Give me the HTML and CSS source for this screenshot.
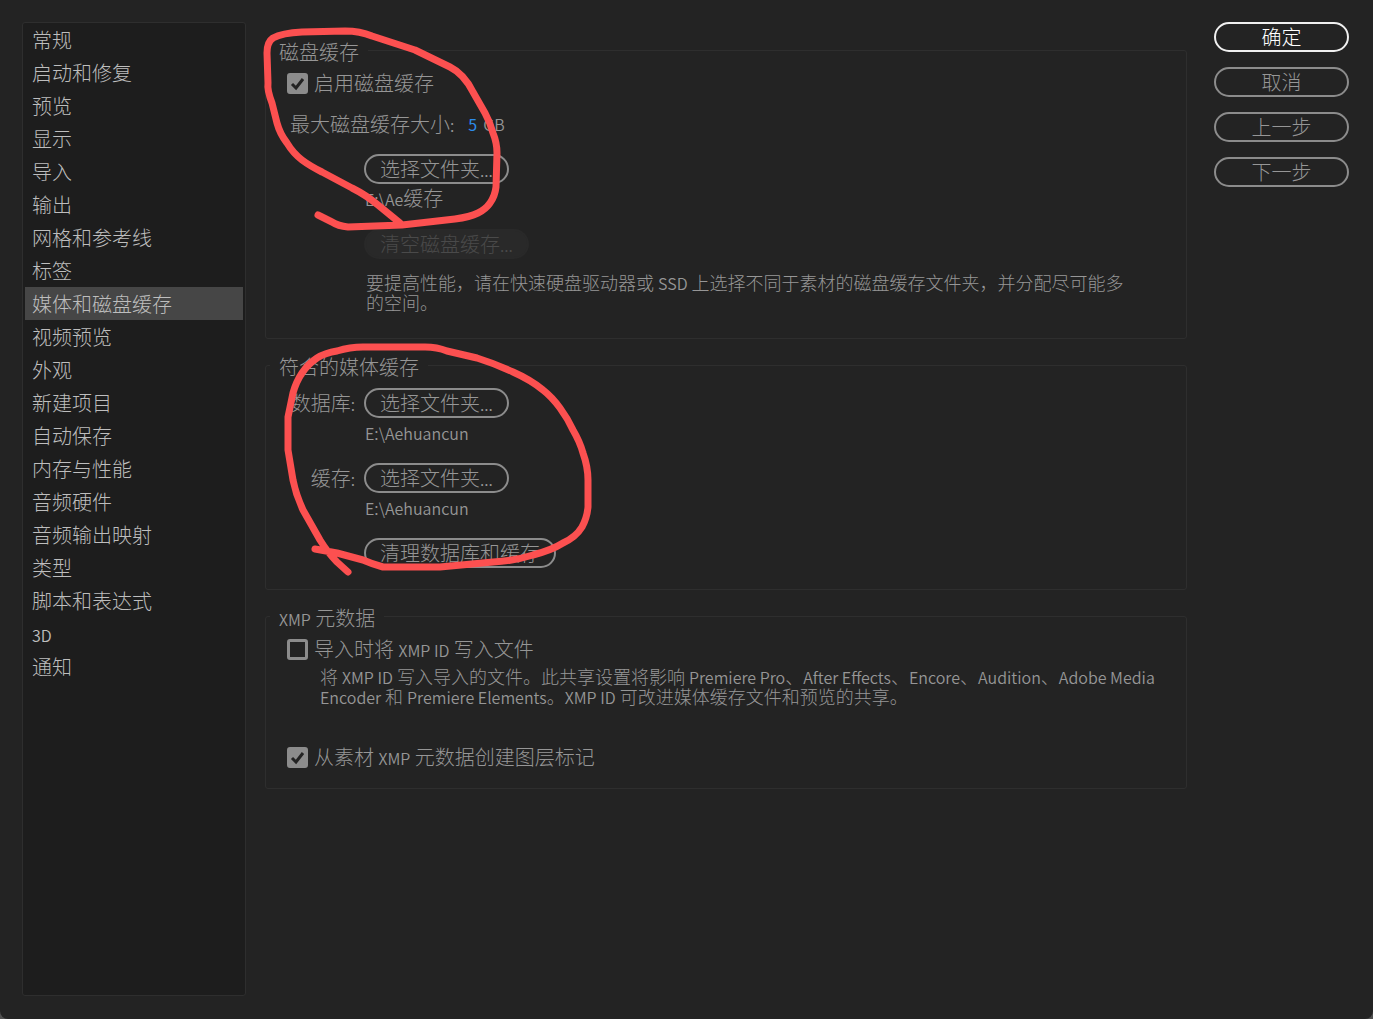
FILE: index.html
```html
<!DOCTYPE html>
<html lang="zh-CN">
  <head>
    <meta charset="UTF-8" />
    <meta name="viewport" content="width=device-width, initial-scale=1.0" />
    <title>首选项</title>
    <link rel="stylesheet" href="styles.css">
  </head>
  <body>
    <div class="dialog">
      <nav class="sidebar">
        <a href="#">常规</a>
        <a href="#">启动和修复</a>
        <a href="#">预览</a>
        <a href="#">显示</a>
        <a href="#">导入</a>
        <a href="#">输出</a>
        <a href="#">网格和参考线</a>
        <a href="#">标签</a>
        <a href="#" class="active">媒体和磁盘缓存</a>
        <a href="#">视频预览</a>
        <a href="#">外观</a>
        <a href="#">新建项目</a>
        <a href="#">自动保存</a>
        <a href="#">内存与性能</a>
        <a href="#">音频硬件</a>
        <a href="#">音频输出映射</a>
        <a href="#">类型</a>
        <a href="#">脚本和表达式</a>
        <a href="#"><span class="latin">3D</span></a>
        <a href="#">通知</a>
      </nav>

      <main class="settings">
        <!-- Disk cache -->
        <fieldset class="group group-disk">
          <legend>磁盘缓存</legend>
          <div class="check-row">
            <input type="checkbox" id="enable-cache" checked />
            <label for="enable-cache">启用磁盘缓存</label>
          </div>
          <div class="size-row">
            <label for="cache-size">最大磁盘缓存大小<span class="latin">:</span></label>
            <input type="text" id="cache-size" class="hot-text" value="5" />
            <span class="latin">GB</span>
          </div>
          <div class="folder">
            <button type="button" class="btn">选择文件夹<span class="latin">...</span></button>
            <p class="path"><span class="latin">E:\Ae</span>缓存</p>
          </div>
          <div class="folder">
            <button type="button" class="btn" disabled>清空磁盘缓存<span class="latin">...</span></button>
          </div>
          <p class="note note-disk">要提高性能，请在快速硬盘驱动器或 <span class="latin">SSD</span> 上选择不同于素材的磁盘缓存文件夹，并分配尽可能多的空间。</p>
        </fieldset>

        <!-- Conformed media cache -->
        <fieldset class="group group-media">
          <legend>符合的媒体缓存</legend>
          <div class="folder">
            <label for="database-folder">数据库<span class="latin">:</span></label>
            <button type="button" class="btn" id="database-folder">选择文件夹<span class="latin">...</span></button>
            <p class="path"><span class="latin">E:\Aehuancun</span></p>
          </div>
          <div class="folder">
            <label for="cache-folder">缓存<span class="latin">:</span></label>
            <button type="button" class="btn" id="cache-folder">选择文件夹<span class="latin">...</span></button>
            <p class="path"><span class="latin">E:\Aehuancun</span></p>
          </div>
          <div class="folder">
            <button type="button" class="btn">清理数据库和缓存</button>
          </div>
        </fieldset>

        <!-- XMP metadata -->
        <fieldset class="group group-xmp">
          <legend><span class="latin">XMP</span> 元数据</legend>
          <div class="check-row">
            <input type="checkbox" id="write-id" />
            <label for="write-id">导入时将 <span class="latin">XMP ID</span> 写入文件</label>
          </div>
          <p class="note note-xmp">将 <span class="latin">XMP ID</span> 写入导入的文件。此共享设置将影响 <span class="latin">Premiere Pro</span>、<span class="latin">After Effects</span>、<span class="latin">Encore</span>、<span class="latin">Audition</span>、<span class="latin">Adobe Media Encoder</span> 和 <span class="latin">Premiere Elements</span>。<span class="latin">XMP ID</span> 可改进媒体缓存文件和预览的共享。</p>
          <div class="check-row">
            <input type="checkbox" id="layer-markers" checked />
            <label for="layer-markers">从素材 <span class="latin">XMP</span> 元数据创建图层标记</label>
          </div>
        </fieldset>
      </main>

      <div class="actions">
        <button type="button" class="btn btn-primary">确定</button>
        <button type="button" class="btn">取消</button>
        <button type="button" class="btn">上一步</button>
        <button type="button" class="btn">下一步</button>
      </div>

      <!-- Red pen marks over the two cache groups -->
      <svg class="pen" width="620" height="600" viewBox="0 0 620 600" aria-hidden="true">
        <path d="M400 223L378 205Q366 195 352 188L322 172Q310 166 302 160Q293 153 287 143Q280 134 277 123L272 103Q267 90 268 83L267 53Q267 42 273 38Q282 33 302 32L345 31Q360 31 372 36L415 50L450 67Q464 74 473 92L485 113Q490 122 493 133Q497 143 497 153L496 187Q495 196 490 203Q486 209 478 213Q470 217 455 219L402 225L348 227Q338 226 332 222L318 215" />
        <path d="M348 572L337 562Q328 553 320 540L303 510Q296 495 293 480L288 450L288 417L293 393Q296 382 302 373Q308 364 317 358Q325 353 337 351Q350 347 363 347L425 347Q437 347 447 351L477 358Q496 364 513 372Q531 380 543 390Q552 397 560 408Q568 419 573 430Q580 442 583 453Q588 467 588 480L588 507Q587 518 582 527Q576 537 563 543Q552 550 533 555Q514 561 493 562L440 567L383 567Q372 564 363 560L337 553L315 549" />
      </svg>
    </div>
  </body>
</html>
```
FILE: styles.css
```css
* {
  box-sizing: border-box;
}

body {
  margin: 0;
  background-color: #505050;
  color: #969696;
  font-family: "Noto Sans CJK SC", sans-serif;
  font-size: 20px;
  font-weight: 300;
  line-height: 24px;
}

p {
  margin: 0;
}

.dialog {
  position: relative;
  display: flex;
  min-height: 100vh;
  padding: 22px 24px 23px 22px;
  background-color: #232323;
  border-radius: 0 0 8px 8px;
}

.latin {
  font-size: 16px;
  font-weight: 350;
  line-height: 1;
}

/* Category list */
.sidebar {
  width: 224px;
  flex-shrink: 0;
  margin-right: 19px;
  padding: 0 2px;
  background-color: #1d1d1d;
  border: 1px solid #2e2e2e;
  border-radius: 3px;
}

.sidebar a {
  display: block;
  padding: 0 7px;
  color: #bebebe;
  line-height: 33px;
  text-decoration: none;
}

.sidebar a.active {
  background-color: #464646;
}

/* Setting groups */
.settings {
  display: flex;
  flex: 1;
  flex-direction: column;
  gap: 12px;
  min-width: 0;
  padding-top: 14px;
}

.group {
  min-width: 0;
  margin: 0;
  padding: 0 0 26px 21px;
  border: 1px solid #2e2e2e;
  border-radius: 3px;
}

.group legend {
  margin-left: -17px;
  padding: 4px 9px 0;
}

.group-media {
  padding-top: 9px;
  padding-bottom: 21px;
}

.group-disk,
.group-xmp {
  padding-top: 7px;
}

.group-xmp {
  padding-bottom: 19px;
}

.check-row {
  display: flex;
  align-items: center;
  gap: 6px;
}

input[type="checkbox"] {
  appearance: none;
  width: 21px;
  height: 21px;
  margin: 0;
  border: 3px solid #8c8c8c;
  border-radius: 3px;
}

input[type="checkbox"]:checked {
  background: #8c8c8c url("data:image/svg+xml,%3Csvg xmlns='http://www.w3.org/2000/svg' viewBox='0 0 15 15'%3E%3Cpath d='M2 8l4 4 7-9' fill='none' stroke='%23232323' stroke-width='3'/%3E%3C/svg%3E") center no-repeat;
}

.size-row {
  display: flex;
  align-items: center;
  height: 24px;
  margin: 17px 0 18px 3px;
}

.hot-text {
  width: 15px;
  margin-left: 14px;
  padding: 0;
  background: none;
  border: none;
  color: #2d8ceb;
  font: inherit;
  font-size: 16px;
  font-weight: 400;
}

/* Label column, then the button with its path underneath */
.folder {
  display: grid;
  grid-template-columns: 68px auto;
  column-gap: 9px;
  row-gap: 2px;
  align-items: center;
  justify-content: start;
}

.folder + .folder {
  margin-top: 19px;
}

.folder label {
  text-align: right;
}

.folder .btn {
  grid-column: 2;
}

.path {
  grid-column: 2;
  padding-left: 1px;
}

.note {
  font-size: 18px;
  line-height: 20px;
}

.note-disk {
  margin: 13px 50px 0 79px;
}

.note-xmp {
  margin: 5px 30px 39px 33px;
}

/* Buttons */
.btn {
  height: 30px;
  padding: 0 14px;
  background: none;
  border: 2px solid #8c8c8c;
  border-radius: 15px;
  color: #969696;
  font: inherit;
  line-height: 24px;
}

.btn:disabled {
  background-color: #292929;
  border-color: #292929;
  color: #4a4a4a;
}

.btn-primary {
  border-color: #f0f0f0;
  color: #fff;
}

.actions {
  display: flex;
  flex-direction: column;
  flex-shrink: 0;
  gap: 15px;
  width: 135px;
  margin-left: 27px;
}

.pen {
  position: absolute;
  top: 0;
  left: 0;
  fill: none;
  stroke: #fc5050;
  stroke-width: 7;
  stroke-linecap: round;
  stroke-linejoin: round;
  pointer-events: none;
}
```
